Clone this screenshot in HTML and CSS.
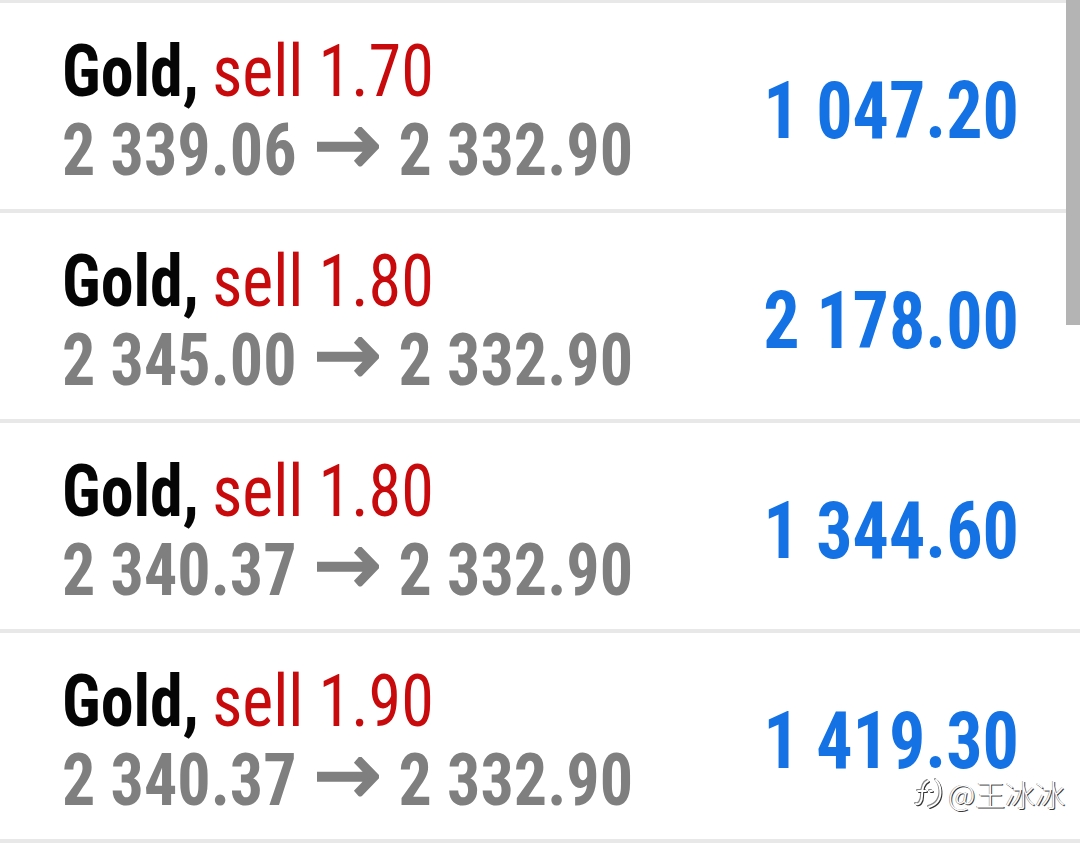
FILE: index.html
```html
<!DOCTYPE html>
<html lang="zh">
<head>
<meta charset="utf-8">
<link rel="stylesheet" href="styles.css">
</head>
<body>
<div class="list">
  <div class="row">
    <div class="content">
      <div class="info">
        <div class="title"><span class="sym">Gold,</span> <span class="side">sell 1.70</span></div>
        <div class="prices">2 339.06<svg class="arrow" viewBox="0 0 62 36" width="62" height="36"><path d="M0 18H57M40 2L57 18L40 34"/></svg>2 332.90</div>
      </div>
      <div class="profit">1 047.20</div>
    </div>
  </div>
  <div class="row">
    <div class="content">
      <div class="info">
        <div class="title"><span class="sym">Gold,</span> <span class="side">sell 1.80</span></div>
        <div class="prices">2 345.00<svg class="arrow" viewBox="0 0 62 36" width="62" height="36"><path d="M0 18H57M40 2L57 18L40 34"/></svg>2 332.90</div>
      </div>
      <div class="profit">2 178.00</div>
    </div>
  </div>
  <div class="row">
    <div class="content">
      <div class="info">
        <div class="title"><span class="sym">Gold,</span> <span class="side">sell 1.80</span></div>
        <div class="prices">2 340.37<svg class="arrow" viewBox="0 0 62 36" width="62" height="36"><path d="M0 18H57M40 2L57 18L40 34"/></svg>2 332.90</div>
      </div>
      <div class="profit">1 344.60</div>
    </div>
  </div>
  <div class="row">
    <div class="content">
      <div class="info">
        <div class="title"><span class="sym">Gold,</span> <span class="side">sell 1.90</span></div>
        <div class="prices">2 340.37<svg class="arrow" viewBox="0 0 62 36" width="62" height="36"><path d="M0 18H57M40 2L57 18L40 34"/></svg>2 332.90</div>
      </div>
      <div class="profit">1 419.30</div>
    </div>
  </div>
</div>
<div class="scrollbar"></div>
<div class="watermark">
  <svg class="wm-icon" viewBox="4 6 30 32" width="30" height="32"><path d="M18 10C13 12 12 18 12 25C12 31 9 34 6 33M8 20H16M20 20H22M26 9C31 14 32 24 28 30C26 33 22 35 19 36"/></svg>
  <span class="wm-text">@王冰冰</span>
</div>
</body>
</html>
```
FILE: styles.css
```css
html, body {
  margin: 0;
  padding: 0;
  background: #ffffff;
}
body {
  width: 1080px;
  height: 843px;
  overflow: hidden;
  position: relative;
  font-family: "Roboto Condensed", Roboto, "Liberation Sans Narrow", sans-serif;
}
.list {
  border-top: 3px solid #e8e8e8;
}
.row {
  height: 206px;
  border-bottom: 4px solid #e8e8e8;
  box-sizing: content-box;
}
.content {
  height: 100%;
  box-sizing: border-box;
  padding: 10px 61px 0 62px;
  display: flex;
  align-items: center;
  justify-content: space-between;
  transform: scaleY(1.1);
  transform-origin: center center;
}
.info {
  font-size: 66px;
  line-height: 72px;
  white-space: nowrap;
}
.title .sym {
  font-weight: 700;
  color: #050505;
}
.title .side {
  font-weight: 400;
  color: #c80a0c;
  margin-left: -2px;
}
.prices {
  font-weight: 700;
  color: #7f7f7f;
}
.arrow {
  vertical-align: 8px;
  margin: 0 20px 0 20px;
  fill: none;
  stroke: #7f7f7f;
  stroke-width: 9;
  stroke-linejoin: miter;
  stroke-linecap: butt;
}
.profit {
  font-size: 72px;
  line-height: 62px;
  font-weight: 700;
  color: #1472e4;
  white-space: nowrap;
}
.scrollbar {
  position: absolute;
  top: 0;
  right: 0;
  width: 14px;
  height: 325px;
  background: #b4b4b4;
}
.watermark {
  position: absolute;
  left: 914px;
  top: 777px;
  display: flex;
  align-items: center;
  gap: 4px;
}
.wm-icon {
  fill: none;
  stroke: #ffffff;
  stroke-width: 2;
  stroke-linecap: round;
  filter: drop-shadow(1px 1px 0 #333) drop-shadow(-0.5px -0.5px 0 #888);
}
.wm-text {
  font-family: "Noto Sans CJK SC", "Noto Sans", sans-serif;
  font-weight: 300;
  font-size: 30px;
  line-height: 30px;
  color: #ffffff;
  text-shadow: 1px 1px 0 #3a3a3a, -0.5px -0.5px 0 #888;
}
```
